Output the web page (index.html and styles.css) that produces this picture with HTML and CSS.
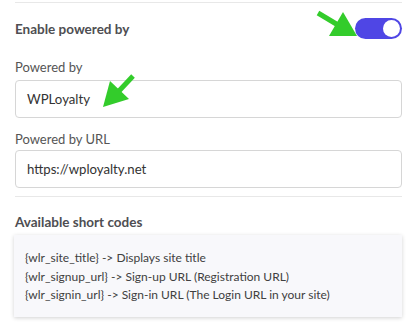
FILE: index.html
```html
<!DOCTYPE html>
<html>
<head>
<meta charset="utf-8">
<link rel="stylesheet" href="styles.css">
</head>
<body>
<div class="panel">
  <div class="divider top-divider"></div>
  <div class="toggle-row">
    <span class="heading">Enable powered by</span>
    <span class="toggle"><span class="knob"></span></span>
  </div>
  <label class="label first-label">Powered by</label>
  <div class="field">WPLoyalty</div>
  <label class="label second-label">Powered by URL</label>
  <div class="field">https://wployalty.net</div>
  <div class="divider bottom-divider"></div>
  <div class="heading codes-heading">Available short codes</div>
  <div class="codes">
    <div>{wlr_site_title} -&gt; Displays site title</div>
    <div>{wlr_signup_url} -&gt; Sign-up URL (Registration URL)</div>
    <div>{wlr_signin_url} -&gt; Sign-in URL (The Login URL in your site)</div>
  </div>
</div>
<svg class="arrows" width="418" height="326" viewBox="0 0 418 326">
  <line x1="318" y1="13" x2="338" y2="25" stroke="#33cc2b" stroke-width="5"/>
  <polygon points="357,36 329,36 343,12" fill="#33cc2b"/>
  <line x1="133" y1="76" x2="119" y2="91" stroke="#33cc2b" stroke-width="5"/>
  <polygon points="103,107 110,81 129,99" fill="#33cc2b"/>
</svg>
</body>
</html>
```
FILE: styles.css
```css
* { box-sizing: border-box; }
html, body {
  margin: 0;
  padding: 0;
  background: #ffffff;
}
body {
  width: 418px;
  height: 326px;
  position: relative;
  overflow: hidden;
  font-family: Lato, "Liberation Sans", sans-serif;
  color: #555555;
}
.panel {
  padding: 0 16px 0 15px;
  display: flex;
  flex-direction: column;
}
.divider {
  height: 1px;
  background: #e8e8e8;
}
.top-divider { margin-top: 2px; }
.toggle-row {
  margin-top: 15px;
  height: 21px;
  display: flex;
  align-items: center;
  justify-content: space-between;
}
.heading {
  font-size: 13.5px;
  font-weight: 700;
  color: #4e4e52;
  line-height: 16px;
}
.toggle {
  width: 47px;
  height: 21px;
  border-radius: 11px;
  background: #4f46e5;
  display: flex;
  align-items: center;
  justify-content: flex-end;
  padding-right: 2px;
}
.knob {
  width: 17px;
  height: 17px;
  border-radius: 50%;
  background: #ffffff;
}
.label {
  font-size: 13px;
  line-height: 16px;
  color: #555555;
}
.first-label { margin-top: 20px; margin-bottom: 5px; }
.second-label { margin-top: 13px; margin-bottom: 3px; }
.field {
  height: 38px;
  border: 1px solid #d6d6d6;
  border-radius: 4px;
  padding: 0 11px;
  display: flex;
  align-items: center;
  font-size: 13.2px;
  color: #333333;
}
.bottom-divider { margin-top: 8px; }
.codes-heading { margin-top: 17px; }
.codes {
  margin-top: 5px;
  margin-left: -1px;
  height: 82px;
  background: #f8f8fb;
  box-shadow: 0 1px 4px rgba(0, 0, 0, 0.18);
  padding: 14px 11px 0 11px;
  font-size: 12px;
  line-height: 18.5px;
  color: #404040;
}
.arrows {
  position: absolute;
  left: 0;
  top: 0;
  pointer-events: none;
}
```
